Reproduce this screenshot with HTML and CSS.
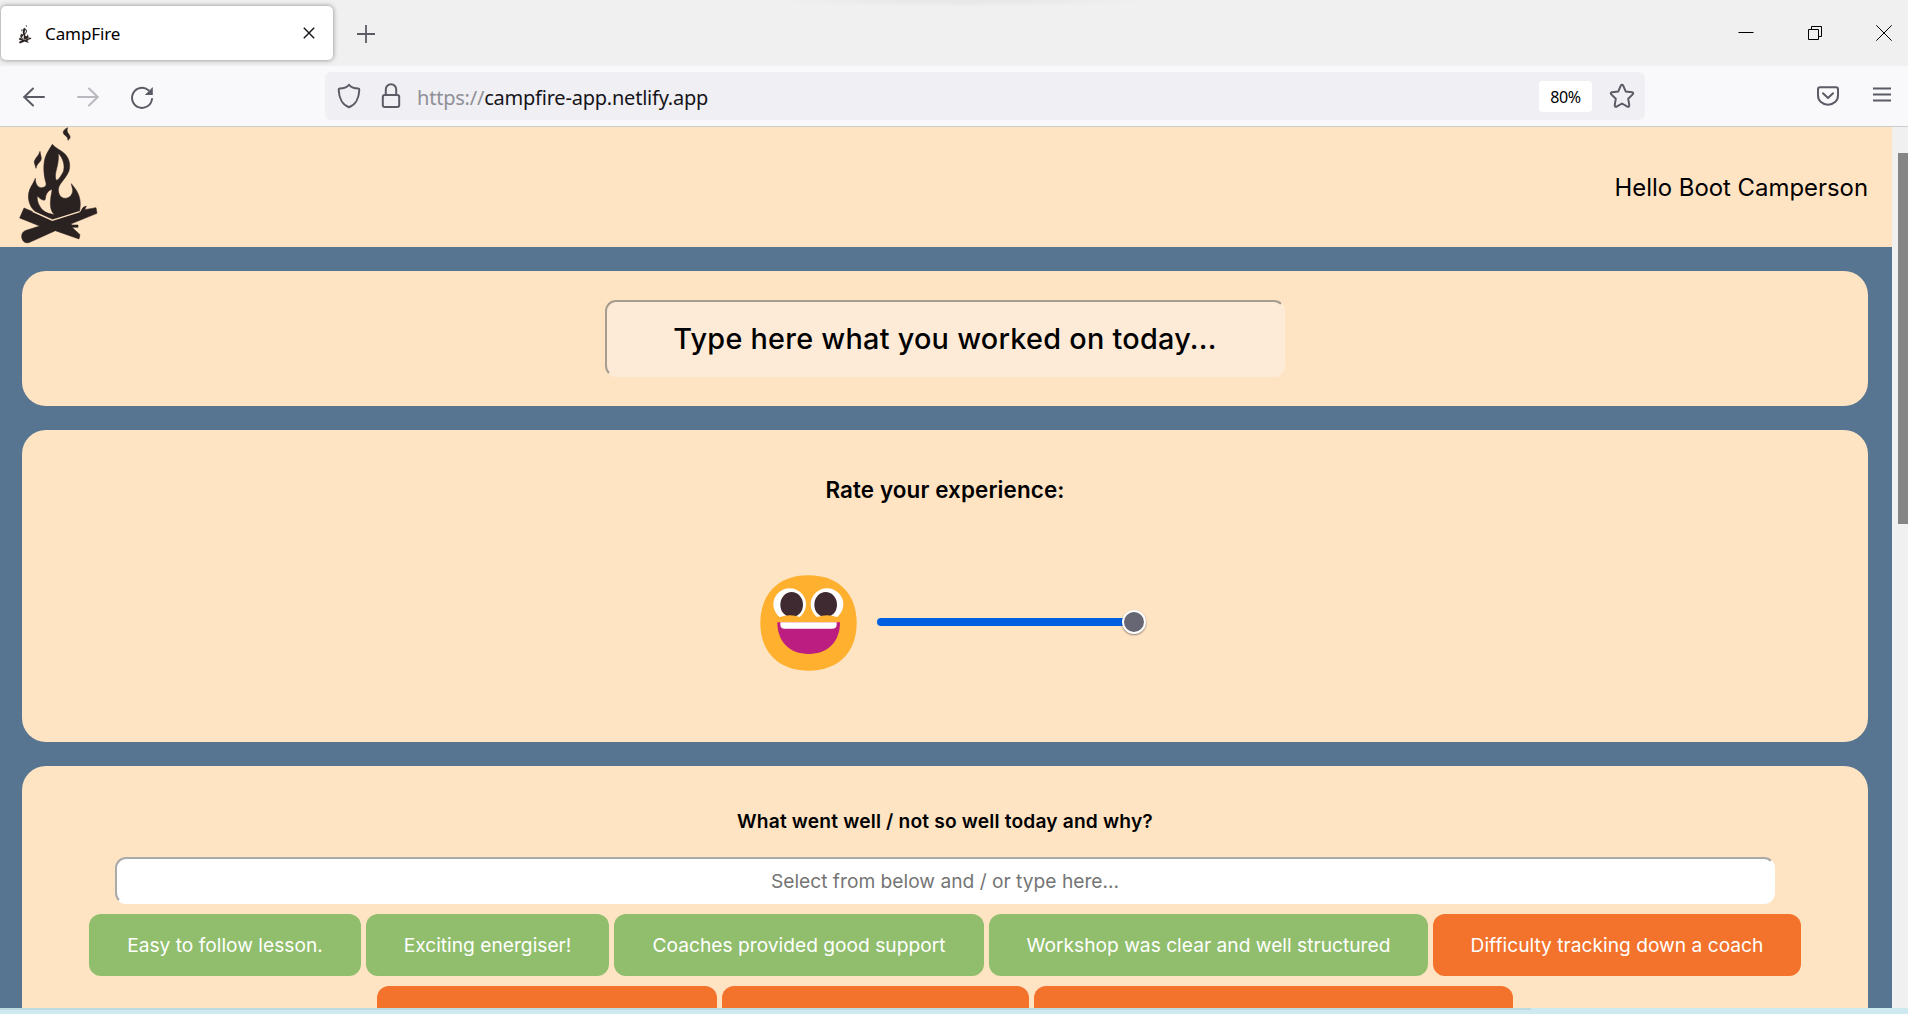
FILE: index.html
```html
<!DOCTYPE html>
<html lang="en">
<head>
<meta charset="utf-8">
<title>CampFire</title>
<link rel="stylesheet" href="styles.css">
</head>
<body>
<svg class="defs" width="0" height="0">
  <symbol id="campfire" viewBox="48 36 252 360">
    <path d="M203 38C190 44 184 54 197 62Q204 67 204 76C212 70 212 64 206 57C201 50 200 45 203 38Z"/>
    <path d="M120 109C117 122 101 133 103 144Q105 149 108 160C109 150 115 146 122 137C127 129 121 121 120 109Z"/>
    <path fill-rule="evenodd" d="M157 88C166 99 181 105 194 116C208 129 212 150 207 167C202 182 191 193 181 207C175 216 174 224 176 232C178 243 186 250 195 250C211 250 219 235 218 224C217 217 215 214 214 206C224 219 232 227 237 243C243 260 241 276 238 291L158 313L106 290C89 276 83 254 86 235C89 218 99 208 106 190C106 207 113 219 125 218C135 217 140 212 138 204C130 178 129 145 137 124C142 110 151 99 157 88ZM175 115C177 136 172 153 168 169C165 181 166 191 169 196C176 195 184 181 190 170C196 153 189 129 175 115ZM156 222C147 226 141 232 138 241C136 249 137 253 133 256C125 255 119 250 112 243C110 258 117 273 129 286C139 295 152 297 164 299C151 289 150 270 152 252C153 239 156 233 156 222Z"/>
    <path d="M72 279L157 315L242 290Q248 274 259 273L254 284L288 278L291 295L212 327L217 330H234V337H216L240 359L237 372L166 347L89 382C75 388 64 376 65 362C66 352 72 348 79 346L119 333L59 309Z"/>
    <path class="log-seam" d="M98 289L157 316L239 290"/>
  </symbol>
</svg>

<header class="tabs">
  <div class="tab">
    <svg class="tab-icon"><use href="#campfire"/></svg>
    <span class="tab-title">CampFire</span>
    <svg class="tab-close" width="12" height="12" viewBox="0 0 12 12"><path d="M.8.8l10.4 10.4M11.2.8L.8 11.2"/></svg>
  </div>
  <svg class="new-tab" width="18" height="18" viewBox="0 0 18 18"><path d="M9 0v18M0 9h18"/></svg>
  <div class="window-controls">
    <svg width="16" height="16" viewBox="0 0 16 16"><path d="M.5 7.5h15"/></svg>
    <svg width="16" height="16" viewBox="0 0 16 16"><path d="M1.5 4.500h10v10h-10zM4.500 4.500v-3h10v10h-3"/></svg>
    <svg width="16" height="16" viewBox="0 0 16 16"><path d="M.3.3l15.400 15.400M15.700.3L.3 15.700"/></svg>
  </div>
</header>

<nav class="toolbar">
  <div class="nav-buttons">
    <svg width="24" height="24" viewBox="0 0 24 24"><path d="M22 12H2M11 3.500L2.300 12L11 20.500"/></svg>
    <svg class="disabled" width="24" height="24" viewBox="0 0 24 24"><path d="M2 12h20M13 3.500L21.700 12L13 20.500"/></svg>
    <svg width="24" height="24" viewBox="0 0 24 24"><path d="M22 14A10 10 0 1 1 18.500 5.200"/><path class="fill" d="M22.800 2v8h-8z"/></svg>
  </div>
  <div class="address">
    <svg width="24" height="26" viewBox="0 0 24 26"><path d="M12 1.800C14 4 18 5.400 21.300 5.500Q22.400 5.700 22.300 7C22 15 18.500 22 12 24.200C5.500 22 2 15 1.700 7Q1.600 5.700 2.700 5.500C6 5.400 10 4 12 1.800Z"/></svg>
    <svg class="lock" width="20" height="26" viewBox="0 0 20 26"><rect x="1.800" y="12" width="16.400" height="12" rx="2"/><path d="M4.800 12V6.500a5.200 5.200 0 0 1 10.400 0V12"/></svg>
    <div class="url"><span class="scheme">https://</span>campfire-app.netlify.app</div>
    <span class="zoom-level">80%</span>
    <svg class="star" width="26" height="26" viewBox="0 0 26 26"><path d="M11.800 2.700Q13 1 14.200 2.700L16.700 8.400L23 9.200Q25 9.800 23.700 11.400L19.200 15.700L20.300 22.300Q20.200 24.300 18.400 23.700L13 20.500L7.600 23.700Q5.800 24.300 5.700 22.300L6.800 15.700L2.300 11.400Q1 9.800 3 9.200L9.300 8.400Z"/></svg>
  </div>
  <div class="tool-icons">
    <svg class="pocket" width="22" height="20" viewBox="0 0 22 20"><path d="M3 1.200h16q2 0 2 2V9.500a10 9.300 0 0 1-20 0V3.200q0-2 2-2z"/><path d="M6 7.300l5 4.700 5-4.700"/></svg>
    <svg width="18" height="16" viewBox="0 0 18 16"><path d="M0 1.500h18M0 7.500h18M0 13.500h18"/></svg>
  </div>
</nav>

<div class="viewport">
  <main class="app">
    <div class="app-header">
      <svg class="logo"><use href="#campfire"/></svg>
      <span class="greeting">Hello Boot Camperson</span>
    </div>

    <section class="card worked-on">
      <div class="field topic">Type here what you worked on today...</div>
    </section>

    <section class="card rating">
      <h2 class="rating-title">Rate your experience:</h2>
      <div class="rating-row">
        <svg class="emoji" width="97" height="96" viewBox="0 0 291 288">
          <path fill="#ffb02e" d="M145 1C240 1 290 61 290 144C290 227 240 287 145 287C51 287 1 227 1 144C1 61 51 1 145 1Z"/>
          <g fill="#fff"><ellipse cx="89" cy="88" rx="49" ry="48"/><ellipse cx="201" cy="88" rx="49" ry="48"/></g>
          <g fill="#402a32"><ellipse cx="95" cy="89" rx="34" ry="38"/><ellipse cx="197" cy="89" rx="34" ry="38"/></g>
          <path fill="#ffb02e" d="M48 142V126H60Q90 116 120 126H171Q201 116 231 126H242V142Z"/>
          <path fill="#bb1d80" d="M52 142H240C240 200 204 237 146 237C88 237 52 200 52 142Z"/>
          <path fill="#fff" d="M61 142H230V149Q230 161 216 161H75Q61 161 61 149Z"/>
        </svg>
        <div class="slider"><span class="thumb"></span></div>
      </div>
    </section>

    <section class="card feedback">
      <h3 class="feedback-title">What went well / not so well today and why?</h3>
      <div class="field reason">Select from below and / or type here...</div>
      <div class="options">
        <div class="option good w1">Easy to follow lesson.</div>
        <div class="option good w2">Exciting energiser!</div>
        <div class="option good w3">Coaches provided good support</div>
        <div class="option good w4">Workshop was clear and well structured</div>
        <div class="option bad w5">Difficulty tracking down a coach</div>
      </div>
      <div class="options">
        <div class="option bad w6"></div>
        <div class="option bad w7"></div>
        <div class="option bad w8"></div>
      </div>
    </section>
  </main>
  <div class="scrollbar"><div class="scroll-thumb"></div></div>
</div>
<footer class="desktop-edge"></footer>
</body>
</html>
```
FILE: styles.css
```css
* { box-sizing: border-box; }

body {
  margin: 0;
  width: 1908px;
  height: 1014px;
  overflow: hidden;
  display: flex;
  flex-direction: column;
  font-family: Inter, "Liberation Sans", sans-serif;
  color: #000;
}

svg { display: block; flex: none; fill: none; }
.defs { position: absolute; }
#campfire { fill: #2a2121; stroke: #2a2121; stroke-width: 1.6; }
.log-seam { fill: none; stroke: #ffe4c4; stroke-width: 4; }

/* Tab strip */
.tabs {
  height: 66px;
  flex: none;
  display: flex;
  align-items: flex-start;
  background: radial-gradient(ellipse 190px 7px at 963px 0, #e8e8e8 30%, #f0f0f0);
  font-family: "Noto Sans", sans-serif;
}
.tab {
  margin: 6px 0 0 1px;
  width: 332px;
  height: 54px;
  padding: 0 18px 0 16px;
  display: flex;
  align-items: center;
  background: #fff;
  border-radius: 5px;
  box-shadow: 0 0 5px rgba(0, 0, 0, .45);
}
.tab-icon { width: 16px; height: 19px; margin-top: 2px; }
.tab-title { margin-left: 12px; font-size: 17px; letter-spacing: -.1px; }
.tab-close { margin-left: auto; stroke: #15141a; stroke-width: 1.4; }
.new-tab { margin: 25px 0 0 24px; stroke: #5b5b66; stroke-width: 1.8; }
.window-controls {
  margin: 25px 16px 0 auto;
  display: flex;
  gap: 53px;
  stroke: #000;
}

/* Navigation toolbar */
.toolbar {
  height: 61px;
  flex: none;
  display: flex;
  align-items: center;
  background: #f9f9fb;
  border-bottom: 1px solid #ccc;
  font-family: "Noto Sans", sans-serif;
  stroke: #5b5b66;
  stroke-width: 2;
  stroke-linecap: round;
  stroke-linejoin: round;
}
.nav-buttons { display: flex; gap: 30px; margin: 2px 0 0 22px; width: 303px; }
.disabled { opacity: .4; }
.fill { fill: #5b5b66; stroke: none; }
.address {
  width: 1320px;
  height: 48px;
  padding: 0 10px 0 12px;
  display: flex;
  align-items: center;
  background: #f0f0f4;
  border-radius: 6px;
}
.lock { margin-left: 20px; }
.url {
  margin: 2px 0 0 16px;
  font-size: 20px;
  letter-spacing: -.22px;
  color: #15141a;
  white-space: nowrap;
}
.scheme { color: #8f8f96; }
.zoom-level {
  margin-left: auto;
  width: 53px;
  height: 31px;
  padding-top: 1px;
  line-height: 30px;
  text-align: center;
  font-size: 16px;
  letter-spacing: -.3px;
  background: #fff;
  border-radius: 4px;
}
.star { margin-left: 17px; }
.tool-icons {
  margin: -2px 17px 0 auto;
  display: flex;
  align-items: center;
  gap: 34px;
}
.pocket { margin-top: 2px; }

/* Page */
.viewport { height: 881px; flex: none; display: flex; overflow: hidden; }
.app {
  width: 1892px;
  padding: 0 24px 0 22px;
  display: flex;
  flex-direction: column;
  gap: 24px;
  background: #577590;
}
.app-header {
  height: 120px;
  flex: none;
  margin: 0 -24px 0 -22px;
  padding: 0 24px 0 16px;
  display: flex;
  align-items: center;
  justify-content: space-between;
  background: #ffe4c4;
}
.logo { width: 84px; height: 120px; }
.greeting { font-size: 23.9px; }

.card {
  flex: none;
  display: flex;
  flex-direction: column;
  align-items: center;
  background: #ffe4c4;
  border-radius: 24px;
}
.field {
  display: flex;
  align-items: center;
  justify-content: center;
  border-style: solid;
  border-width: 2px;
  border-radius: 11px;
  white-space: nowrap;
}
.worked-on { height: 135px; justify-content: center; }
.topic {
  width: 680px;
  height: 77px;
  background: #fdebd8;
  border-color: #a69d91 #fdebd8 #fdebd8 #a69d91;
  font-size: 28.8px;
  font-weight: 500;
  letter-spacing: .27px;
}

.rating { height: 312px; }
.rating-title {
  margin: 45px 0 0;
  font-size: 22.4px;
  line-height: 30px;
  font-weight: 600;
  letter-spacing: .12px;
}
.rating-row { display: flex; align-items: center; margin-top: 70px; padding-left: 15px; }
.slider {
  margin: -2px 0 0 20px;
  width: 269px;
  height: 8px;
  display: flex;
  align-items: center;
  justify-content: flex-end;
  background: #0060df;
  border-radius: 4px;
}
.thumb {
  width: 24px;
  height: 24px;
  border: 2px solid #fff;
  border-radius: 50%;
  background: #676774;
  box-shadow: 0 1px 2px rgba(0, 0, 0, .45);
}

.feedback { height: 300px; }
.feedback-title {
  margin: 42px 0 0;
  font-size: 19.2px;
  line-height: 26px;
  font-weight: 600;
  letter-spacing: .17px;
}
.reason {
  margin-top: 23px;
  width: 1660px;
  height: 47px;
  background: #fff;
  border-color: #a9a9a9 #fff #fff #a9a9a9;
  color: #757575;
  font-size: 19.2px;
}
.options { margin-top: 10px; display: flex; gap: 5px; }
.option {
  height: 62px;
  line-height: 62px;
  border-radius: 12px;
  text-align: center;
  font-size: 19.2px;
  white-space: nowrap;
  color: #fff;
}
.good { background: #90be6d; }
.bad { background: #f3722c; }
.w1 { width: 272px; }
.w2 { width: 243px; }
.w3 { width: 370px; }
.w4 { width: 439px; }
.w5 { width: 368px; }
.w6 { width: 340px; }
.w7 { width: 307px; }
.w8 { width: 479px; }

.scrollbar {
  width: 16px;
  padding: 26px 0 0 6px;
  background: #f0f0f0;
}
.scroll-thumb { height: 371px; background: #858585; }

.desktop-edge {
  height: 6px;
  flex: none;
  background: linear-gradient(#bedbe2, #bedbe2) 0 0 / 1531px 2px no-repeat, #cee9ef;
}
```
